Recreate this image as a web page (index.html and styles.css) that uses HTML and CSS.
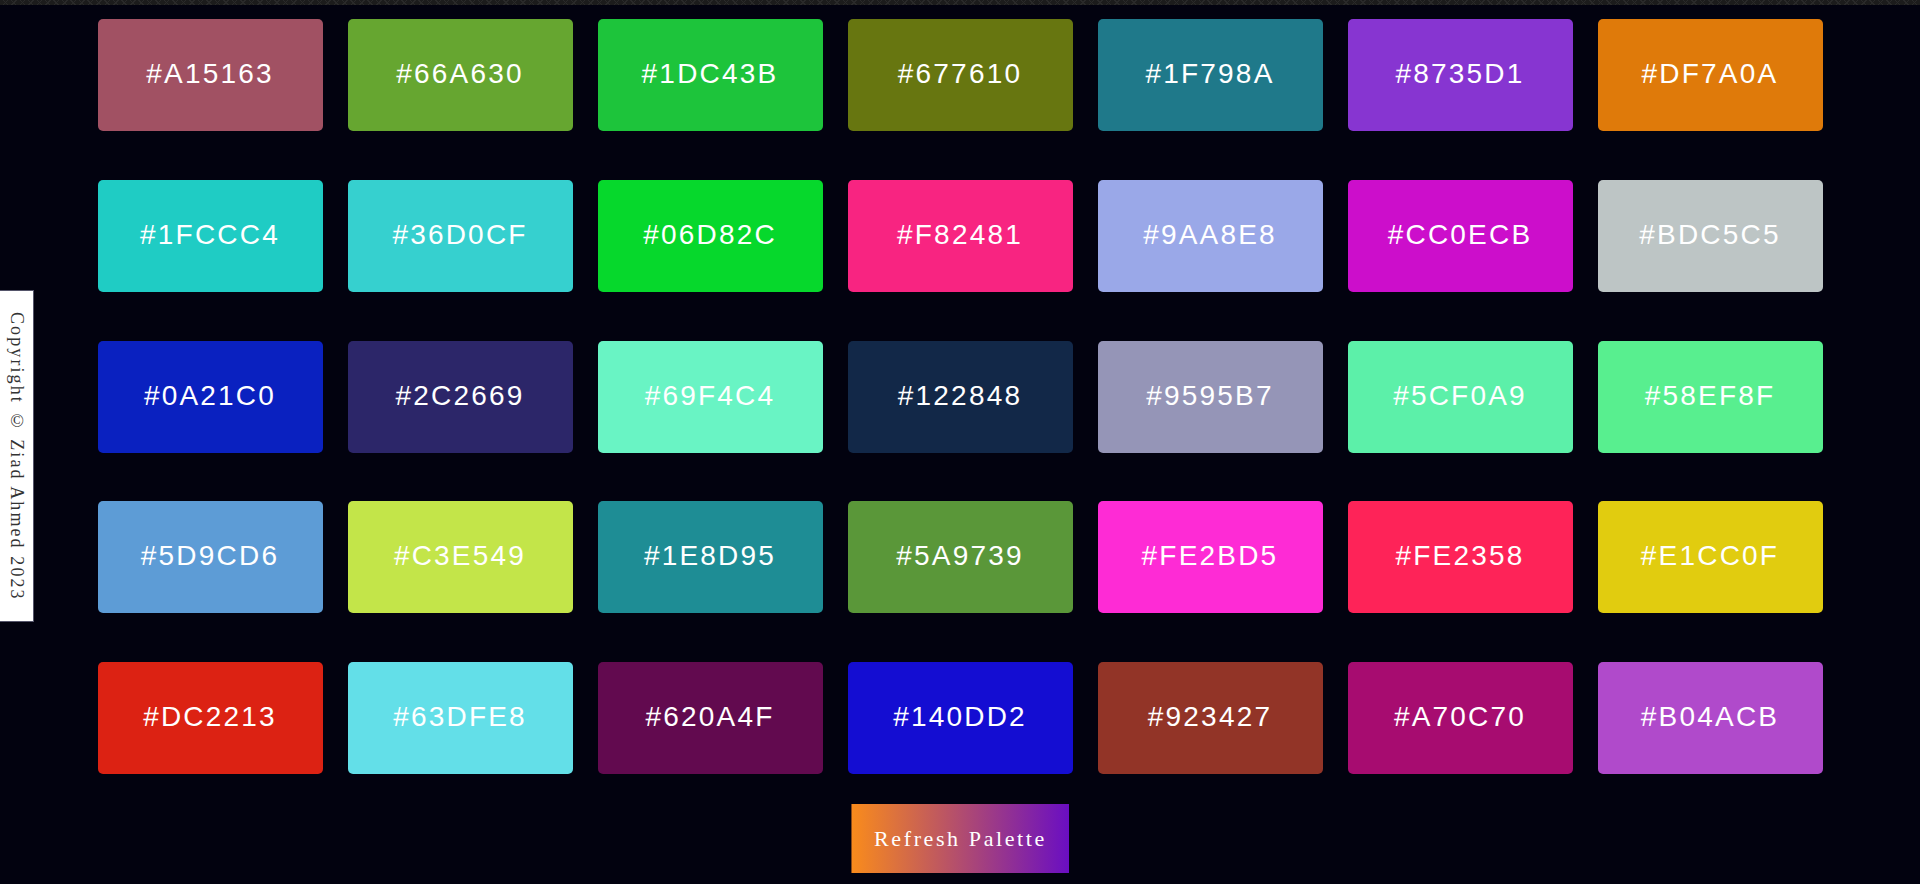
FILE: index.html
```html
<!DOCTYPE html>
<html lang="en">
<head>
<meta charset="utf-8">
<title>Color Palette</title>
<link rel="stylesheet" href="styles.css">
</head>
<body>
<div class="top-strip"></div>
<main class="page">
  <div class="palette">
    <div class="swatch" style="background:#A15163">#A15163</div>
    <div class="swatch" style="background:#66A630">#66A630</div>
    <div class="swatch" style="background:#1DC43B">#1DC43B</div>
    <div class="swatch" style="background:#677610">#677610</div>
    <div class="swatch" style="background:#1F798A">#1F798A</div>
    <div class="swatch" style="background:#8735D1">#8735D1</div>
    <div class="swatch" style="background:#DF7A0A">#DF7A0A</div>

    <div class="swatch" style="background:#1FCCC4">#1FCCC4</div>
    <div class="swatch" style="background:#36D0CF">#36D0CF</div>
    <div class="swatch" style="background:#06D82C">#06D82C</div>
    <div class="swatch" style="background:#F82481">#F82481</div>
    <div class="swatch" style="background:#9AA8E8">#9AA8E8</div>
    <div class="swatch" style="background:#CC0ECB">#CC0ECB</div>
    <div class="swatch" style="background:#BDC5C5">#BDC5C5</div>

    <div class="swatch" style="background:#0A21C0">#0A21C0</div>
    <div class="swatch" style="background:#2C2669">#2C2669</div>
    <div class="swatch" style="background:#69F4C4">#69F4C4</div>
    <div class="swatch" style="background:#122848">#122848</div>
    <div class="swatch" style="background:#9595B7">#9595B7</div>
    <div class="swatch" style="background:#5CF0A9">#5CF0A9</div>
    <div class="swatch" style="background:#58EF8F">#58EF8F</div>

    <div class="swatch" style="background:#5D9CD6">#5D9CD6</div>
    <div class="swatch" style="background:#C3E549">#C3E549</div>
    <div class="swatch" style="background:#1E8D95">#1E8D95</div>
    <div class="swatch" style="background:#5A9739">#5A9739</div>
    <div class="swatch" style="background:#FE2BD5">#FE2BD5</div>
    <div class="swatch" style="background:#FE2358">#FE2358</div>
    <div class="swatch" style="background:#E1CC0F">#E1CC0F</div>

    <div class="swatch" style="background:#DC2213">#DC2213</div>
    <div class="swatch" style="background:#63DFE8">#63DFE8</div>
    <div class="swatch" style="background:#620A4F">#620A4F</div>
    <div class="swatch" style="background:#140DD2">#140DD2</div>
    <div class="swatch" style="background:#923427">#923427</div>
    <div class="swatch" style="background:#A70C70">#A70C70</div>
    <div class="swatch" style="background:#B04ACB">#B04ACB</div>
  </div>
  <button class="refresh">Refresh Palette</button>
</main>
<div class="copyright">Copyright © Ziad Ahmed 2023</div>
</body>
</html>
```

FILE: styles.css
```css
html, body {
  margin: 0;
  padding: 0;
}

body {
  background: #02020f;
  height: 884px;
  overflow: hidden;
  font-family: "Liberation Sans", Arial, sans-serif;
}

.top-strip {
  height: 5px;
  background-color: #1c1c1c;
  background-image:
    repeating-linear-gradient(45deg, transparent 0 5px, #2a2a2a 5px 6px),
    repeating-linear-gradient(-45deg, transparent 0 5px, #2a2a2a 5px 6px);
}

.page {
  display: flex;
  flex-direction: column;
  align-items: center;
  padding-top: 14px;
}

.palette {
  display: grid;
  grid-template-columns: repeat(7, 225px);
  grid-auto-rows: 112px;
  column-gap: 25px;
  row-gap: 48.75px;
}

.swatch {
  display: flex;
  align-items: center;
  justify-content: center;
  border-radius: 5px;
  color: #ffffff;
  font-size: 28px;
  line-height: 1;
  padding-bottom: 2px;
  box-sizing: border-box;
  letter-spacing: 2.2px;
}

.refresh {
  margin-top: 30px;
  width: 218px;
  height: 69px;
  border: none;
  border-left: 1px solid #8a4a1a;
  background: linear-gradient(to right, #f98b1c, #6a0ec2);
  color: #ffffff;
  font-family: "Liberation Serif", "Times New Roman", serif;
  font-size: 22px;
  letter-spacing: 2.6px;
  padding: 0;
  cursor: pointer;
}

.copyright {
  position: fixed;
  left: 0;
  top: 290px;
  width: 34px;
  height: 332px;
  box-sizing: border-box;
  background: #ffffff;
  border: 1px solid #55556a;
  border-left: none;
  writing-mode: vertical-rl;
  display: flex;
  align-items: center;
  justify-content: center;
  font-family: "Liberation Serif", "Times New Roman", serif;
  font-size: 18px;
  letter-spacing: 2.1px;
  color: #333333;
}
```
